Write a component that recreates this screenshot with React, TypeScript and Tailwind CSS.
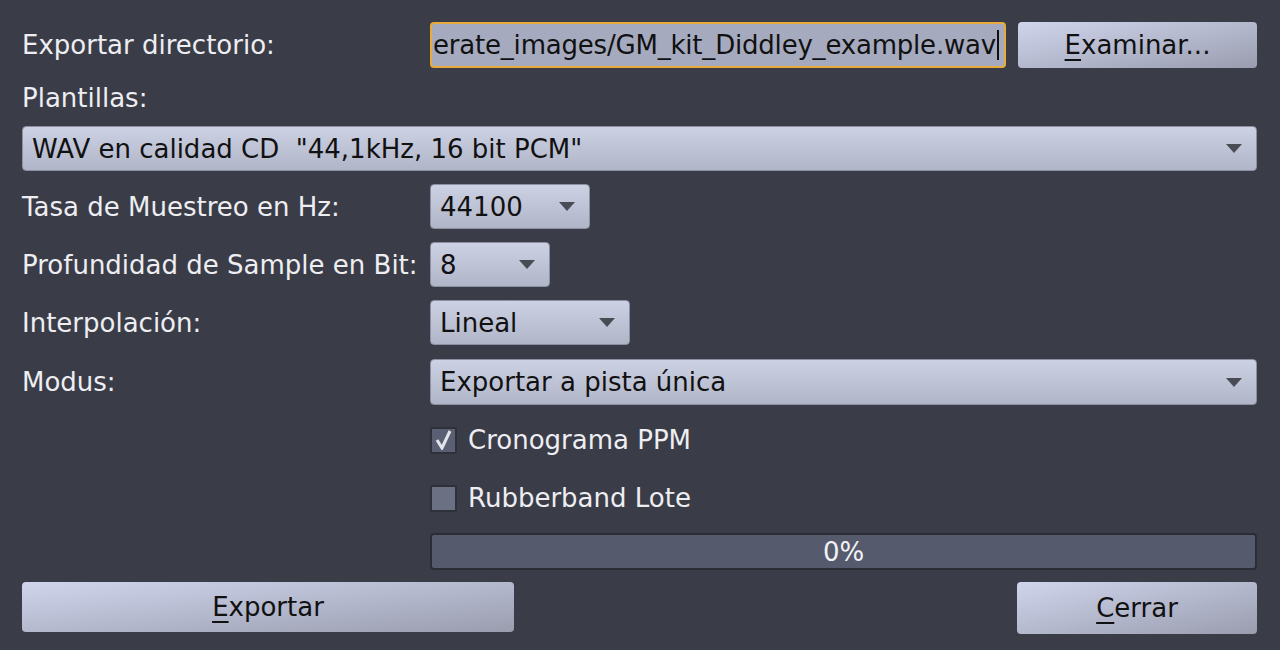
import type { ReactNode } from "react";

const font = { fontFamily: '"DejaVu Sans", "Liberation Sans", sans-serif' };

function Arrow() {
  return (
    <svg width="16" height="9" viewBox="0 0 16 9" className="shrink-0">
      <path d="M0 0 H16 L8 9 Z" fill="#4a4c55" />
    </svg>
  );
}

function Combo({ value, className = "" }: { value: string; className?: string }) {
  return (
    <div
      className={`flex h-[45px] items-center justify-between rounded-[4px] border border-[#8c90a2] bg-gradient-to-b from-[#cdd1e4] to-[#b1b5c8] pl-[9px] pr-[14px] text-[#111] ${className}`}
    >
      <span className="whitespace-pre">{value}</span>
      <Arrow />
    </div>
  );
}

function Button({ mnemonic, rest, className = "" }: { mnemonic: string; rest: string; className?: string }) {
  return (
    <div
      className={`flex items-center justify-center rounded-[4px] bg-gradient-to-br from-[#d0d5ec] via-[#b5b9ce] to-[#9a9dae] text-[#111] ${className}`}
    >
      <span>
        <span className="underline decoration-2 underline-offset-[5px]">{mnemonic}</span>
        {rest}
      </span>
    </div>
  );
}

function Row({ label, children, className = "" }: { label?: string; children: ReactNode; className?: string }) {
  return (
    <div className={`flex items-center ${className}`}>
      <div className="w-[408px] shrink-0 whitespace-nowrap">{label}</div>
      {children}
    </div>
  );
}

function Check({ checked, label, className = "" }: { checked: boolean; label: string; className?: string }) {
  return (
    <Row className={`h-[44px] ${className}`}>
      <div className="flex items-center gap-[11px]">
        <div
          className={`flex h-[27px] w-[27px] items-center justify-center rounded-[2px] border-2 border-[#2f313a] ${
            checked ? "bg-[#5b5f73]" : "bg-[#6c7083]"
          }`}
        >
          {checked && (
            <svg width="18" height="20" viewBox="0 0 18 20">
              <path d="M2 10 L7 18 L15 1" fill="none" stroke="#e4e5ea" strokeWidth="3" />
            </svg>
          )}
        </div>
        <span>{label}</span>
      </div>
    </Row>
  );
}

export default function App() {
  return (
    <div
      className="flex h-[650px] w-[1280px] flex-col bg-[#3a3d48] pl-[22px] pr-[23px] pt-[22px] text-[26px] leading-none text-[#eeeef2]"
      style={font}
    >
      <Row label="Exportar directorio:" className="h-[46px]">
        <div className="flex h-[46px] w-[576px] items-center overflow-hidden rounded-[4px] border-2 border-[#e9aa3c] bg-[#a5aabe] pl-[1px] text-[#111]">
          <span className="whitespace-nowrap tracking-[-0.2px]">erate_images/GM_kit_Diddley_example.wav</span>
          <span className="ml-[1px] h-[30px] w-[2px] shrink-0 bg-[#111]" />
        </div>
        <Button mnemonic="E" rest="xaminar..." className="ml-[12px] h-[46px] flex-1" />
      </Row>

      <div className="mt-[7px] flex h-[45px] items-center">Plantillas:</div>

      <Combo value={'WAV en calidad CD  "44,1kHz, 16 bit PCM"'} className="mt-[6px]" />

      <Row label="Tasa de Muestreo en Hz:" className="mt-[13px] h-[45px]">
        <Combo value="44100" className="w-[160px]" />
      </Row>

      <Row label="Profundidad de Sample en Bit:" className="mt-[13px] h-[45px]">
        <Combo value="8" className="w-[120px]" />
      </Row>

      <Row label="Interpolación:" className="mt-[13px] h-[45px]">
        <Combo value="Lineal" className="w-[200px]" />
      </Row>

      <Row label="Modus:" className="mt-[14px] h-[46px]">
        <Combo value="Exportar a pista única" className="h-[46px] flex-1" />
      </Row>

      <Check checked label="Cronograma PPM" className="mt-[13px]" />
      <Check checked={false} label="Rubberband Lote" className="mt-[14px]" />

      <Row className="mt-[13px] h-[37px]">
        <div className="flex h-[37px] flex-1 items-center justify-center rounded-[4px] border-2 border-[#2b2d35] bg-[#555a6d] text-[#f2f2f5]">
          0%
        </div>
      </Row>

      <div className="mt-[12px] flex items-start justify-between">
        <Button mnemonic="E" rest="xportar" className="h-[50px] w-[492px]" />
        <Button mnemonic="C" rest="errar" className="h-[52px] w-[240px]" />
      </div>
    </div>
  );
}
